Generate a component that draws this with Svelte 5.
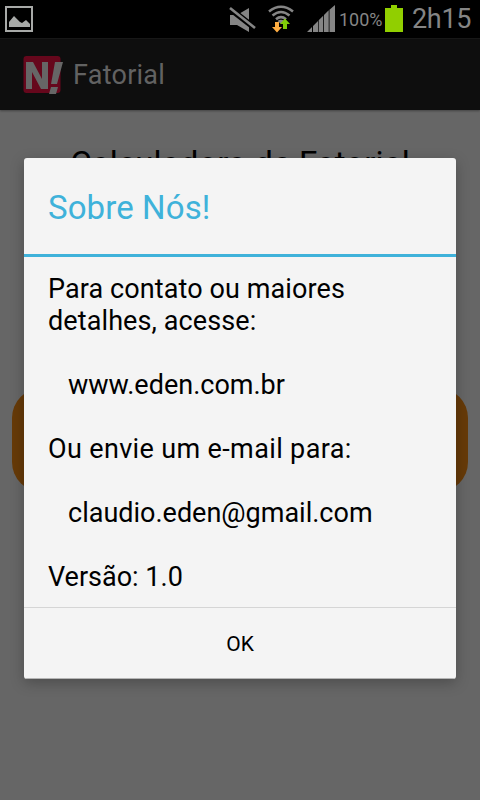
<script lang="ts">
  interface Props {
    title?: string;
    level?: number;
    time?: string;
  }

  let { title = "Fatorial", level = 100, time = "2h15" }: Props = $props();
</script>

<div class="screen">
  <header class="status-bar">
    <svg class="picture" width="28" height="26" viewBox="0 0 28 26" aria-hidden="true">
      <path d="M1 1h26v24H1z" fill="none" stroke="#a8aaa8" stroke-width="2" />
      <path d="M4 21v-5l5-6 6 6 2 1 4-3 4 4v3z" fill="#a8aaa8" />
    </svg>
    <svg class="mute" width="28" height="26" viewBox="0 0 28 26" fill="#858585" aria-hidden="true">
      <path d="M1 8h7L20 1v24L8 18H1z" />
      <path d="M0 1l27 21" stroke="#000" stroke-width="6" />
      <path d="M1 1l25 20" stroke="#858585" stroke-width="2.6" />
    </svg>
    <svg class="wifi" width="26" height="28" viewBox="0 0 26 28" fill="none" aria-hidden="true">
      <g stroke="#858585" stroke-width="2.6">
        <path d="M1 6.5q12-9.5 24 0" />
        <path d="M4.5 10.5q8.5-7 17 0" />
        <path d="M8 14.3q5-4.2 10 0" />
      </g>
      <path d="M9.5 16q3.5-2.5 7 0L13 19z" fill="#858585" />
      <path d="M7 17h4v5h3l-5 5.5L4 22h3z" fill="#ffad42" />
      <path d="M15 24v-5h-3l5-5.5 5 5.5h-3v5z" fill="#80cc08" />
    </svg>
    <svg class="signal" width="28" height="27" viewBox="0 0 28 27" fill="#858585" aria-hidden="true">
      <path d="M0 27l5-5v5zM6 27v-6l5-5v11zM11.7 27V15.3l4.5-4.500V27zM17 27V10l4.700-4.700V27zM22.500 27V4.800L28 0v27z" />
    </svg>
    <span class="level">{level}%</span>
    <svg class="battery" width="18" height="27" viewBox="0 0 18 27" aria-hidden="true">
      <path d="M0 3h6V0h6v3h6v24H0z" fill="#91cf00" />
    </svg>
    <span class="time">{time}</span>
  </header>

  <div class="action-bar">
    <svg class="logo" width="42" height="40" viewBox="0 0 42 40" aria-hidden="true">
      <rect x="0.5" y="1" width="37" height="37" rx="3" fill="#66071c" />
      <path d="M3 34V7h7l9 17V7h6v27h-7L9 17v17z" fill="#666" />
      <path d="M32 7h8l-6 22h-6zM28 32h7l-2 7h-7z" fill="#666" />
    </svg>
    <span class="app-name">{title}</span>
  </div>

  <main class="page">
    <h1>Calculadora de Fatorial</h1>
    <div class="calc-button"></div>
  </main>

  <div class="overlay">
    <div class="dialog" role="dialog" aria-labelledby="dialog-title">
      <h2 id="dialog-title">Sobre Nós!</h2>
      <div class="message">
        <p class="intro">Para contato ou maiores detalhes, acesse:</p>
        <p class="indent">www.eden.com.br</p>
        <p class="mail">Ou envie um e-mail para:</p>
        <p class="indent">claudio.eden@gmail.com</p>
        <p>Versão: 1.0</p>
      </div>
      <button type="button">OK</button>
    </div>
  </div>
</div>

<style>
  :global(body) {
    margin: 0;
  }

  .screen {
    position: relative;
    width: 480px;
    height: 800px;
    overflow: hidden;
    background: #666;
    font-family: Roboto, sans-serif;
    color: #000;
  }

  .status-bar {
    display: flex;
    align-items: flex-start;
    box-sizing: border-box;
    height: 38px;
    padding: 5px 9px 0 5px;
    background: #000;
    color: #858585;
  }

  .status-bar > * {
    flex-shrink: 0;
  }

  .picture {
    margin: 1px auto 0 0;
  }

  .mute {
    margin: 2px 11px 0 0;
  }

  .wifi {
    margin-right: 13px;
  }

  .level {
    width: 46px;
    margin: 4px 0 0 4px;
    font-size: 18px;
    line-height: 22px;
    white-space: nowrap;
  }

  .battery {
    margin-right: 9px;
  }

  .time {
    width: 59px;
    font-size: 27px;
    line-height: 28px;
    letter-spacing: -0.3px;
    white-space: nowrap;
  }

  .action-bar {
    display: flex;
    align-items: center;
    box-sizing: border-box;
    height: 72px;
    padding-left: 23px;
    border-top: 1px solid #171717;
    background: #0e0e0e;
    box-shadow: 0 1px 2px rgba(0, 0, 0, 0.35);
  }

  .app-name {
    margin-left: 8px;
    font-size: 27px;
    line-height: 32px;
    letter-spacing: 0.25px;
    color: #626262;
  }

  .page {
    display: flex;
    flex-direction: column;
    padding: 34px 12px 0;
  }

  h1 {
    margin: 0;
    font-size: 33px;
    font-weight: 400;
    line-height: 39px;
    letter-spacing: 0.1px;
    text-align: center;
    white-space: nowrap;
  }

  .calc-button {
    height: 104px;
    margin-top: 205px;
    border-radius: 30px;
    background: #663a08;
  }

  .overlay {
    position: absolute;
    inset: 37px 0 0;
    display: flex;
    align-items: center;
    justify-content: center;
  }

  .dialog {
    display: flex;
    flex-direction: column;
    width: 432px;
    height: 521px;
    border-radius: 3px;
    overflow: hidden;
    background: #f4f4f4;
    box-shadow: 0 4px 14px rgba(0, 0, 0, 0.25);
  }

  h2 {
    box-sizing: border-box;
    height: 99px;
    margin: 0;
    padding: 30px 24px 0;
    border-bottom: 3px solid #3fb2da;
    font-size: 33px;
    font-weight: 400;
    line-height: 39px;
    letter-spacing: 0.1px;
    color: #3fb2da;
  }

  .message {
    display: flex;
    flex-direction: column;
    gap: 32px;
    flex: 1;
    padding: 16px 24px 0;
    font-size: 27px;
    line-height: 32px;
  }

  p {
    margin: 0;
  }

  .intro {
    letter-spacing: 0.1px;
  }

  .mail {
    letter-spacing: 0.36px;
  }

  .indent {
    padding-left: 20px;
  }

  button {
    height: 72px;
    padding: 2px 0 0;
    border: 0;
    border-top: 1px solid #d5d5d5;
    border-bottom: 1px solid #b5b5b5;
    background: none;
    font-family: inherit;
    font-size: 21px;
    line-height: 26px;
    color: #000;
  }
</style>
